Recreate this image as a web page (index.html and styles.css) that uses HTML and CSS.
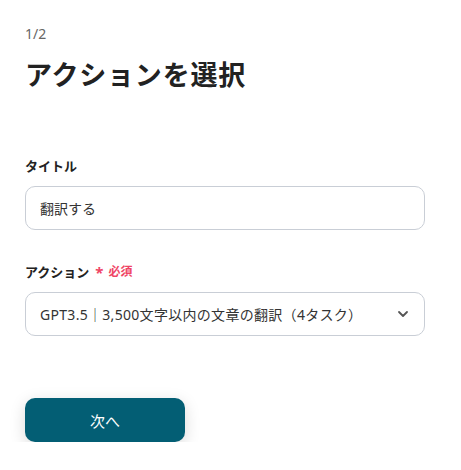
FILE: index.html
```html
<!DOCTYPE html>
<html lang="ja">
<head>
  <meta charset="UTF-8">
  <meta name="viewport" content="width=device-width, initial-scale=1.0">
  <title>アクションを選択</title>
  <link rel="stylesheet" href="styles.css">
</head>
<body>
  <div class="panel">
    <p class="step">1/2</p>
    <h1>アクションを選択</h1>

    <div class="field">
      <label class="field-label" for="titleInput">タイトル</label>
      <input type="text" id="titleInput" class="text-input" value="翻訳する">
    </div>

    <div class="field">
      <label class="field-label" for="actionSelect">アクション<span class="required"><span class="star">*</span>必須</span></label>
      <div class="select">
        <span class="select-value">GPT3.5｜3,500文字以内の文章の翻訳（4タスク）</span>
        <svg class="chevron" width="14" height="14" viewBox="0 0 14 14"><path d="M3 5l4 4 4-4" fill="none" stroke="#555" stroke-width="1.8" stroke-linecap="round" stroke-linejoin="round"/></svg>
      </div>
    </div>

    <button class="next-btn">次へ</button>
  </div>
</body>
</html>
```

FILE: styles.css
```css
body {
  margin: 0;
  background: #fff;
  font-family: "Noto Sans", "Noto Sans CJK JP", sans-serif;
  color: #222;
}

.panel {
  padding: 24px 36px 0 25px;
}

.step {
  margin: 0;
  font-size: 14px;
  line-height: 20px;
  color: #666;
}

h1 {
  margin: 12px 0 0;
  font-size: 27px;
  line-height: 38px;
  font-weight: 700;
  letter-spacing: 0.8px;
  color: #222;
}

.field {
  margin-top: 62px;
}

.field + .field {
  margin-top: 32px;
}

.field-label {
  display: flex;
  align-items: center;
  font-size: 13px;
  line-height: 20px;
  font-weight: 700;
  color: #222;
  margin-bottom: 10px;
}

.required {
  display: flex;
  align-items: center;
  gap: 5px;
  color: #ef4565;
  font-size: 12px;
  font-weight: 700;
  margin-left: 6px;
}

.star {
  font-size: 15px;
}

.text-input {
  box-sizing: border-box;
  width: 100%;
  height: 44px;
  padding: 0 14px;
  border: 1px solid #c9ced6;
  border-radius: 10px;
  font-family: inherit;
  font-size: 14px;
  color: #333;
  outline: none;
}

.select {
  box-sizing: border-box;
  height: 44px;
  padding: 0 14px;
  border: 1px solid #c9ced6;
  border-radius: 10px;
  display: flex;
  align-items: center;
  justify-content: space-between;
  font-size: 14px;
  letter-spacing: 0.3px;
  color: #333;
}

.next-btn {
  margin-top: 62px;
  width: 160px;
  height: 44px;
  border: none;
  border-radius: 10px;
  background: #035e74;
  color: #fff;
  font-family: inherit;
  font-size: 15px;
  box-shadow: 0 4px 16px rgba(0, 0, 0, 0.15);
  cursor: pointer;
}
```
